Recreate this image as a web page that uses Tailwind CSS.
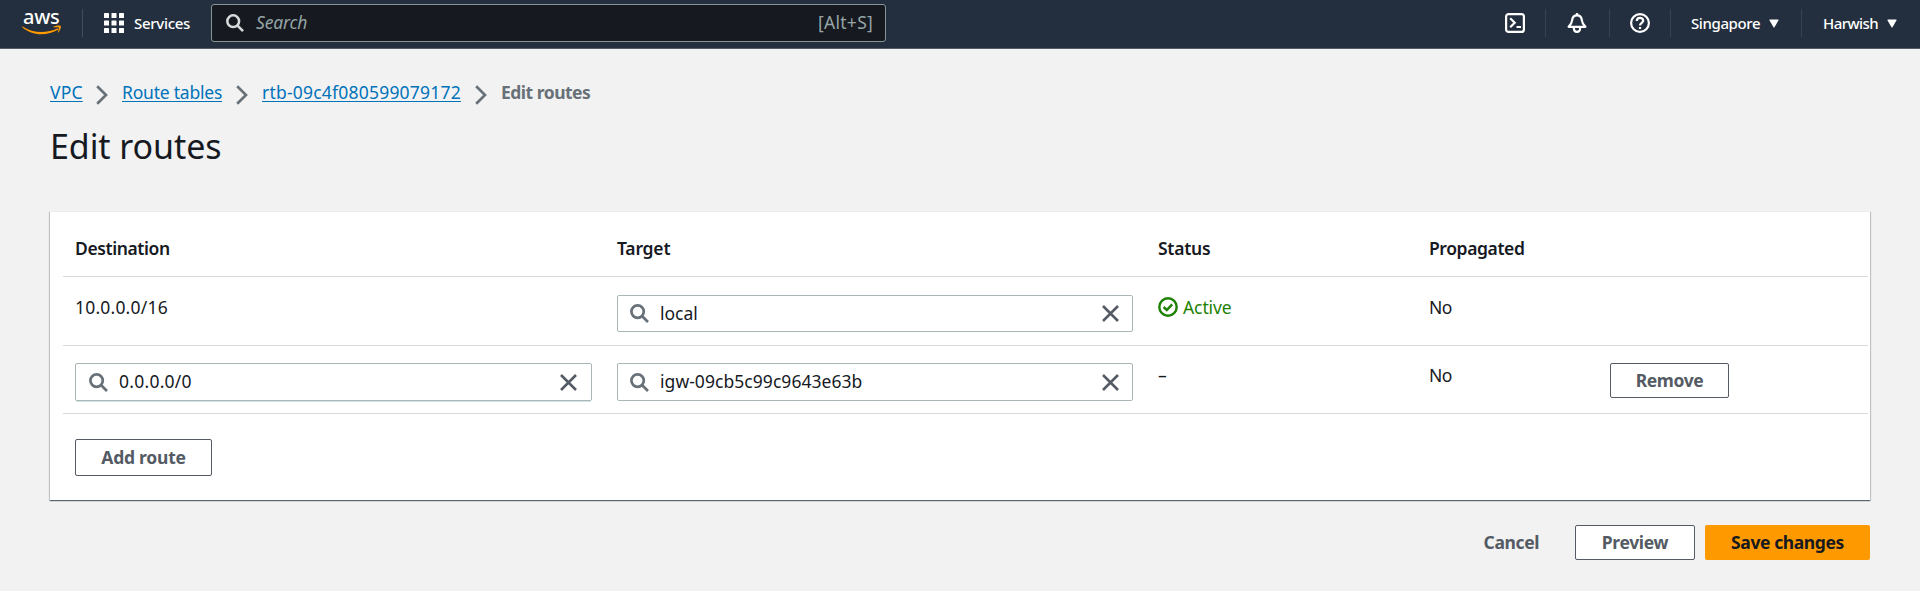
<!DOCTYPE html>
<html lang="en">
<head>
<meta charset="utf-8">
<title>Edit routes | VPC</title>
<script src="https://cdn.jsdelivr.net/npm/@tailwindcss/browser@4"></script>
</head>
<body class="min-h-screen bg-[#f2f2f2] font-['Noto_Sans',sans-serif] text-[17.5px] leading-6 text-[#16191f]">
<svg class="hidden">
  <symbol id="search" viewBox="0 0 19 19"><g fill="none" stroke="currentColor" stroke-width="2.7"><circle cx="7.6" cy="7.6" r="6.2"/><path d="M12.200 12.200 18 18"/></g></symbol>
  <symbol id="close" viewBox="0 0 17 17"><path d="M1 1l15 15M16 1 1 16" fill="none" stroke="currentColor" stroke-width="2.600"/></symbol>
  <symbol id="chevron" viewBox="0 0 12 20"><path d="M1.200 1.200 10 10l-8.800 8.800" fill="none" stroke="currentColor" stroke-width="2.700"/></symbol>
  <symbol id="caret" viewBox="0 0 10 9"><path d="M1 .5h8q.9 0 .4.900L5.500 8.300q-.5.700-1 0L.6 1.400Q.1.500 1 .5z" fill="currentColor"/></symbol>
</svg>

<header class="flex h-[49px] items-start border-b border-[#545b64] bg-[#232f3e] text-[15px] font-medium text-white">
  <div class="mt-[7px] ml-[22px] h-[31px] w-[60px]">
    <div class="h-[18px] pl-px text-[20px] leading-[20px] tracking-[-0.3px]">aws</div>
    <svg class="h-[10px] w-[40px]" viewBox="0 0 40 10"><path d="M.6 1.400C11 8.200 24 8.800 35.800 3.200l.7 1.200C25 11.200 10 11 .2 2.200q-.3-.9.4-.8z" fill="#f90"/><path d="M31.500 1.800C34 .2 37.500.1 38.600.8c.8.900-.1 4.500-2.300 6.600-.4.300-.7.200-.5-.3.600-1.500 1.400-3.900 1-4.500-.5-.6-3.200-.4-4.900-.2-.6.1-.7-.3-.4-.6z" fill="#f90"/></svg>
  </div>
  <div class="mt-[9px] h-7 w-px bg-[#414d5c]"></div>
  <svg class="mt-[13px] ml-[21px] size-5" viewBox="0 0 20 20" fill="#fff"><rect width="5" height="5" rx=".6"/><rect x="7.500" width="5" height="5" rx=".6"/><rect x="15" width="5" height="5" rx=".6"/><rect y="7.500" width="5" height="5" rx=".6"/><rect x="7.500" y="7.500" width="5" height="5" rx=".6"/><rect x="15" y="7.500" width="5" height="5" rx=".6"/><rect y="15" width="5" height="5" rx=".6"/><rect x="7.500" y="15" width="5" height="5" rx=".6"/><rect x="15" y="15" width="5" height="5" rx=".6"/></svg>
  <span class="mt-[11px] ml-[10px] w-[77px] tracking-[-0.3px]">Services</span>
  <div class="mt-1 flex h-[38px] w-[675px] items-center rounded-[3px] border border-[#879596] bg-[#16191f] pr-[12px] pl-[14px] text-[17.5px] font-normal text-[#95a5a6]">
    <svg class="size-[18px] text-[#d5dbdb]"><use href="#search"/></svg>
    <span class="-mt-0.5 ml-3 grow italic tracking-[-0.15px]">Search</span>
    <span class="-mt-0.5 tracking-[0.25px]">[Alt+S]</span>
  </div>
  <svg class="mt-[13px] ml-auto size-5" viewBox="0 0 20 20" fill="none" stroke="#fff" stroke-width="2.200"><rect x="1.100" y="1.100" width="17.800" height="17.800" rx="2.500"/><path d="M5.200 5.200 9.700 9.700l-4.500 4.500M11.500 14h4.500"/></svg>
  <div class="mt-[9px] ml-5 h-7 w-px bg-[#354252]"></div>
  <svg class="mt-[13px] ml-[21px] size-5" viewBox="0 0 20 20" fill="none" stroke="#fff" stroke-width="2.200"><path d="M10 0v2.500"/><path d="M10 2.300c-3 0-4.600 2-4.800 4.700C5 10 3.700 11.500 1.600 13.800h16.800C16.300 11.500 15 10 14.800 7 14.600 4.300 13 2.300 10 2.300z" stroke-linejoin="round"/><path d="M6.800 14.500c0 2.800 1.200 4.400 3.200 4.400s3.200-1.600 3.200-4.400"/></svg>
  <div class="mt-[9px] ml-[22px] h-7 w-px bg-[#354252]"></div>
  <svg class="mt-[13px] ml-5 size-5" viewBox="0 0 20 20" fill="none" stroke="#fff" stroke-width="2.200"><circle cx="10" cy="10" r="8.900"/><path d="M6.800 8c0-2 1.300-3.200 3.200-3.200s3.200 1.200 3.200 2.900c0 2.300-3.200 2.200-3.200 4.900M10 13.900v2"/></svg>
  <div class="mt-[9px] ml-5 h-7 w-px bg-[#354252]"></div>
  <span class="mt-[11px] ml-5 w-[78px] tracking-[-0.4px]">Singapore</span>
  <svg class="mt-[19px] h-[9px] w-[10px]"><use href="#caret"/></svg>
  <div class="mt-[9px] ml-[22px] h-7 w-px bg-[#354252]"></div>
  <span class="mt-[11px] ml-[21px] w-[64px] tracking-[-0.55px]">Harwish</span>
  <svg class="mt-[19px] mr-[23px] h-[9px] w-[10px]"><use href="#caret"/></svg>
</header>

<main class="px-[50px]">
  <nav class="mt-[31px] flex h-6 items-center text-[#687078]">
    <a class="w-[33px] tracking-[0.2px] text-[#0073bb] underline underline-offset-2" href="#">VPC</a>
    <svg class="mt-1.5 mr-[14px] ml-[13px] h-5 w-3"><use href="#chevron"/></svg>
    <a class="w-[100px] whitespace-nowrap tracking-[-0.22px] text-[#0073bb] underline underline-offset-2" href="#">Route tables</a>
    <svg class="mx-[14px] mt-1.5 h-5 w-3"><use href="#chevron"/></svg>
    <a class="w-[199px] whitespace-nowrap tracking-[0.21px] text-[#0073bb] underline underline-offset-2" href="#">rtb-09c4f080599079172</a>
    <svg class="mx-[14px] mt-1.5 h-5 w-3"><use href="#chevron"/></svg>
    <span class="font-bold tracking-[-0.5px]">Edit routes</span>
  </nav>
  <h1 class="mt-[20px] h-[45px] text-[34px] leading-[45px] tracking-[-0.08px]">Edit routes</h1>

  <section class="mt-[42px] h-[289px] border-t border-[#eaeded] bg-white pr-[2px] pl-[13px] shadow-[0_1px_1px_0_rgba(0,28,36,0.5),1px_1px_1px_0_rgba(0,28,36,0.15),-1px_1px_1px_0_rgba(0,28,36,0.15)]">
    <div class="grid h-[65px] grid-cols-[542px_541px_271px_181px_1fr] border-b border-[#d9dbdb] pt-[24px] font-semibold">
      <div class="px-3 tracking-[-0.4px]">Destination</div>
      <div class="px-3 tracking-[-0.2px]">Target</div>
      <div class="px-3 tracking-[-0.25px]">Status</div>
      <div class="px-3 tracking-[-0.4px]">Propagated</div>
    </div>
    <div class="grid h-[69px] grid-cols-[542px_541px_271px_181px_1fr] border-b border-[#d9dbdb] pt-[18px]">
      <div class="px-3 tracking-[0.2px]">10.0.0.0/16</div>
      <div class="px-3">
        <div class="flex h-[37px] w-[516px] items-center rounded-[2px] border border-[#aab7b8] pr-[13px] pl-[12px]">
          <svg class="size-[19px] text-[#687078]"><use href="#search"/></svg>
          <span class="-mt-0.5 ml-[11px] grow">local</span>
          <svg class="size-[17px] text-[#545b64]"><use href="#close"/></svg>
        </div>
      </div>
      <div class="flex items-start gap-[5px] px-3 tracking-[-0.1px] text-[#1d8102]">
        <svg class="mt-[2px] size-5" viewBox="0 0 20 20" fill="none" stroke="currentColor" stroke-width="2.400"><circle cx="10" cy="10" r="8.700"/><path d="M5.600 10l3.200 3 5.400-5.600"/></svg>
        <span>Active</span>
      </div>
      <div class="px-3 tracking-[-0.6px]">No</div>
    </div>
    <div class="grid h-[68px] grid-cols-[542px_541px_271px_181px_1fr] border-b border-[#d9dbdb] pt-[17px]">
      <div class="px-3">
        <div class="flex h-[38px] w-[517px] items-center rounded-[2px] border border-[#aab7b8] pr-[14px] pl-[13px] shadow-[0_2px_0_-1px_#cfe6e4]">
          <svg class="size-[19px] text-[#687078]"><use href="#search"/></svg>
          <span class="-mt-0.5 ml-[11px] grow tracking-[0.25px]">0.0.0.0/0</span>
          <svg class="size-[17px] text-[#545b64]"><use href="#close"/></svg>
        </div>
      </div>
      <div class="px-3">
        <div class="flex h-[38px] w-[516px] items-center rounded-[2px] border border-[#aab7b8] pr-[13px] pl-[12px]">
          <svg class="size-[19px] text-[#687078]"><use href="#search"/></svg>
          <span class="-mt-0.5 ml-[11px] grow tracking-[0.05px]">igw-09cb5c99c9643e63b</span>
          <svg class="size-[17px] text-[#545b64]"><use href="#close"/></svg>
        </div>
      </div>
      <div class="px-3">–</div>
      <div class="px-3 tracking-[-0.6px]">No</div>
      <div class="px-3">
        <button class="h-[35px] w-[119px] rounded-[2px] border border-[#545b64] pb-0.5 font-bold tracking-[-0.4px] text-[#545b64]">Remove</button>
      </div>
    </div>
    <button class="mt-[25px] ml-3 block h-[37px] w-[137px] rounded-[2px] border border-[#545b64] pb-0.5 font-bold tracking-[-0.25px] text-[#545b64]">Add route</button>
  </section>

  <div class="mt-[25px] flex h-[35px] items-center justify-end font-bold text-[#545b64]">
    <button class="mr-9 pb-0.5 tracking-[-0.4px]">Cancel</button>
    <button class="mr-[10px] h-[35px] w-[120px] rounded-[2px] border border-[#545b64] bg-white pb-0.5 tracking-[-0.35px]">Preview</button>
    <button class="h-[35px] w-[165px] rounded-[2px] bg-[#ff9900] pb-0.5 tracking-[-0.4px] text-[#16191f]">Save changes</button>
  </div>
</main>
</body>
</html>
